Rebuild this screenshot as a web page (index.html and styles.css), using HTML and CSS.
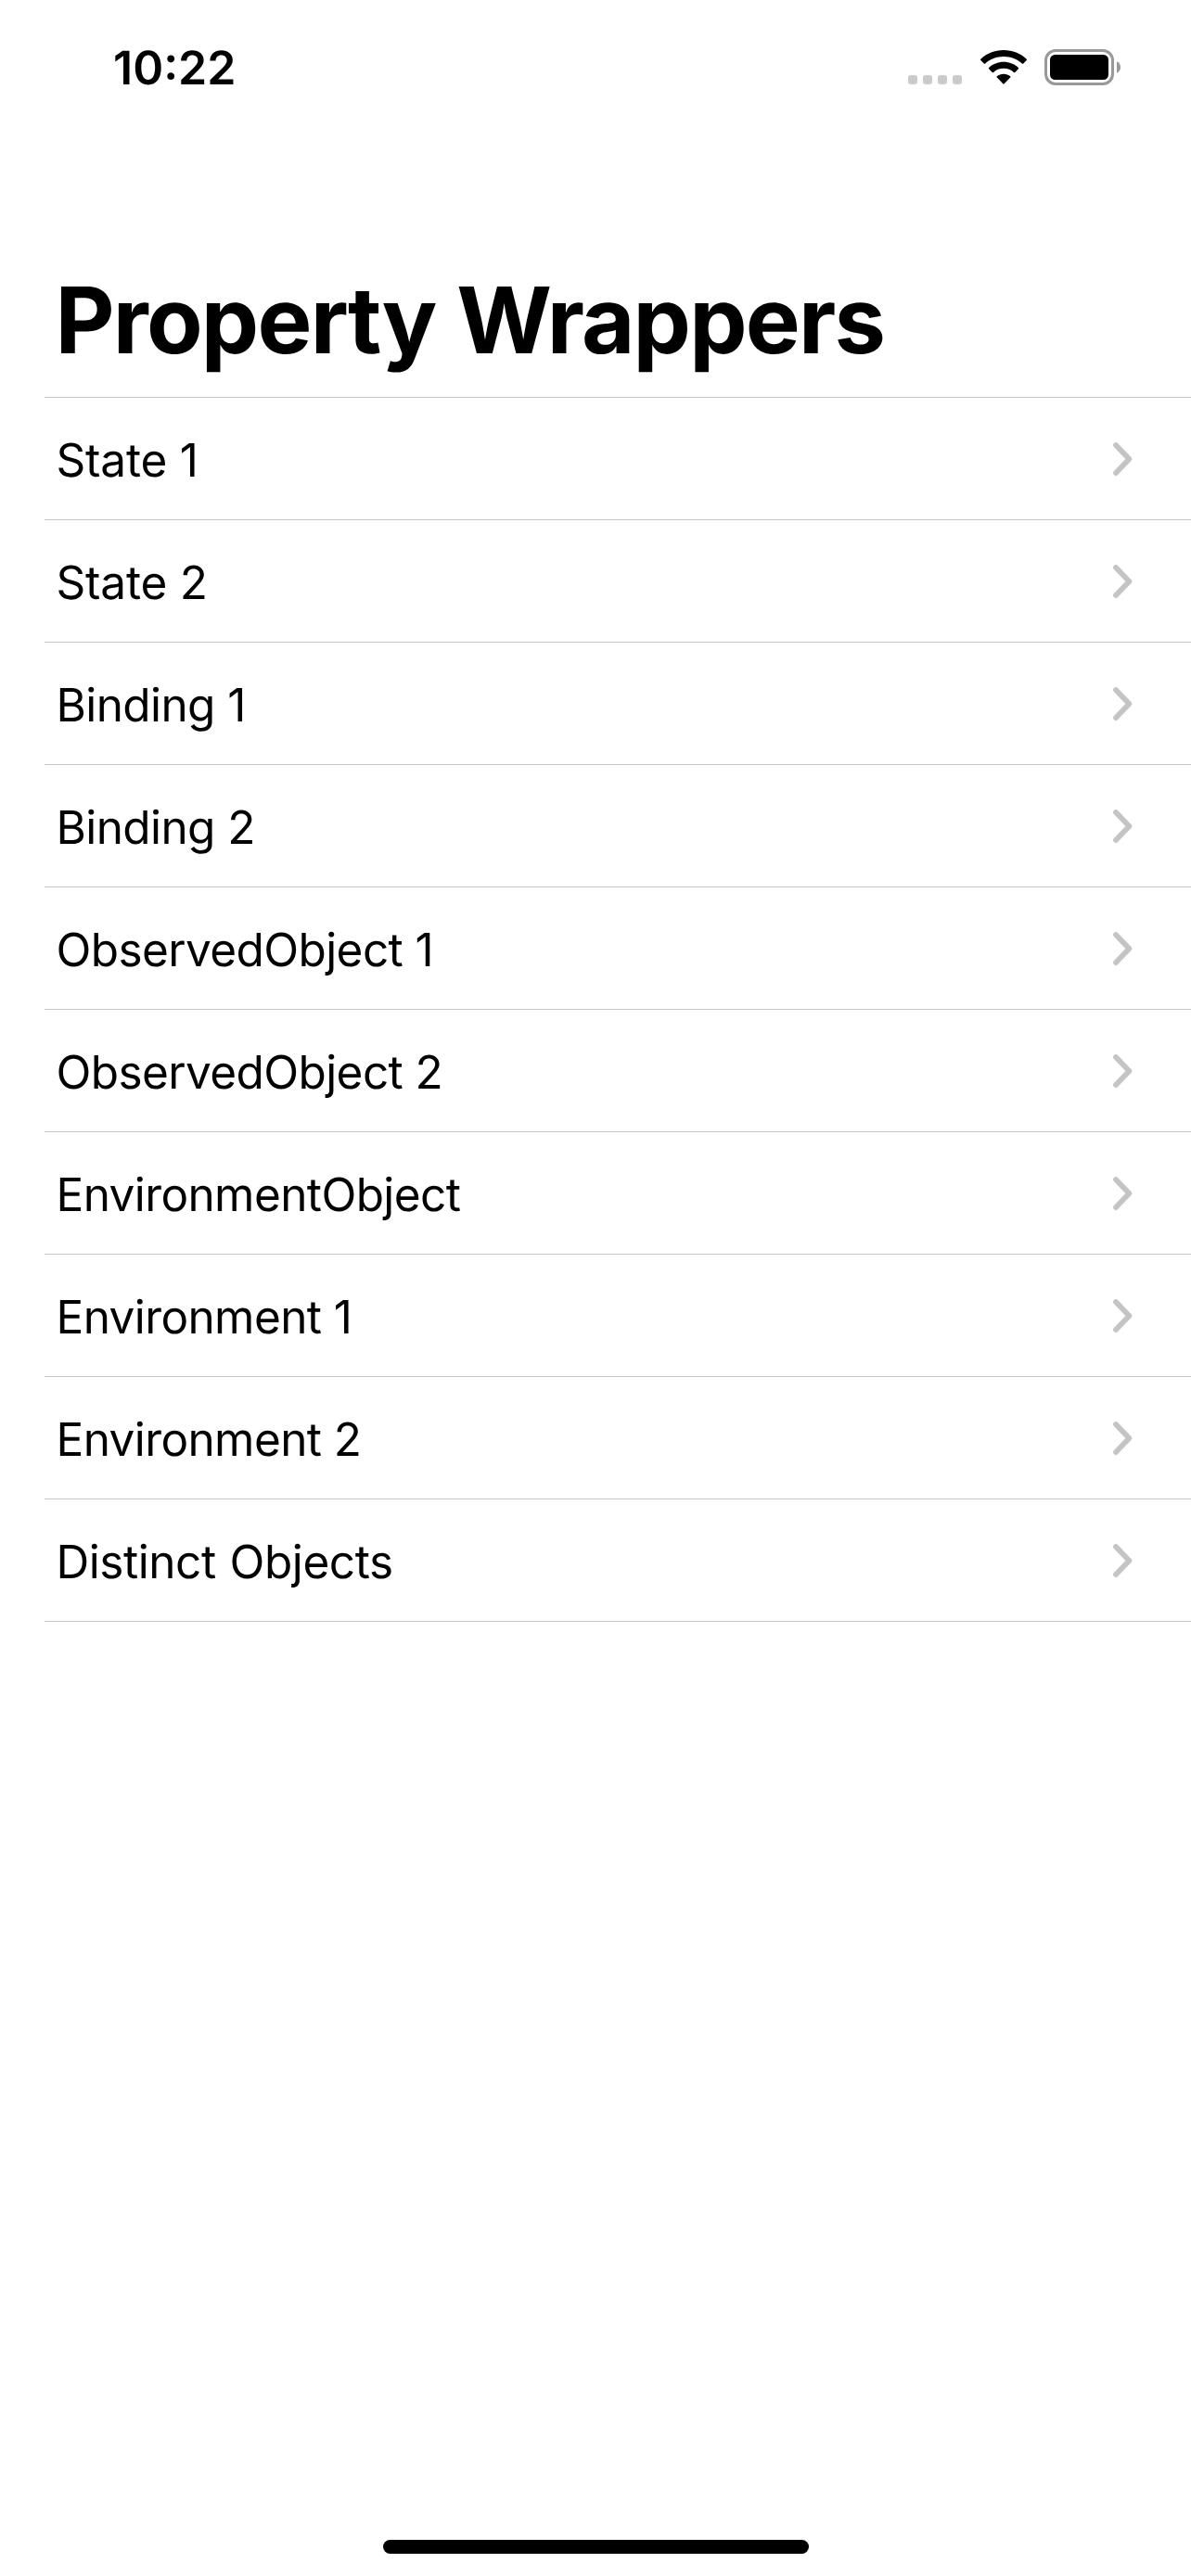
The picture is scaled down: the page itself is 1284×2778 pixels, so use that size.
FILE: index.html
```html
<!DOCTYPE html>
<html lang="en">
<head>
<meta charset="utf-8">
<title>Property Wrappers</title>
<link rel="stylesheet" href="styles.css">
</head>
<body>
<svg class="symbols" aria-hidden="true">
  <symbol id="chevron" viewBox="0 0 21 36"><path d="M3 3 L17.4 18 L3 33" fill="none" stroke="#c4c4c6" stroke-width="5.8" stroke-linecap="round" stroke-linejoin="round"/></symbol>
</svg>
<div class="screen">
  <header class="status-bar">
    <time class="clock">10:22</time>
    <div class="indicators">
      <div class="cellular"><i></i><i></i><i></i><i></i></div>
      <svg class="wifi" viewBox="0 0 50 37" width="50" height="37">
        <path d="M25 0C34.5 0 43.3 3.6 49.7 9.7Q50.3 10.3 49.7 11L46.2 14.6Q45.5 15.2 44.8 14.6C39.6 9.8 32.7 7.1 25 7.1S10.4 9.8 5.2 14.6Q4.5 15.2 3.8 14.6L.3 11Q-.3 10.3.3 9.7C6.7 3.6 15.5 0 25 0Z"/>
        <path d="M25 12.8C31.1 12.8 36.7 15.1 40.9 18.9Q41.6 19.6 40.9 20.3L37.3 23.9Q36.6 24.5 35.9 23.9C33 21.3 29.2 19.8 25 19.8S17 21.3 14.1 23.9Q13.4 24.5 12.7 23.9L9.1 20.3Q8.4 19.6 9.1 18.9C13.3 15.1 18.9 12.8 25 12.8Z"/>
        <path d="M25 25.7C27.7 25.7 30.3 26.6 32.2 28.2Q32.9 28.9 32.2 29.6L25.7 36.3Q25 37 24.3 36.3L17.8 29.6Q17.1 28.9 17.8 28.2C19.7 26.6 22.3 25.7 25 25.7Z"/>
      </svg>
      <svg class="battery" viewBox="0 0 82 39" width="82" height="39">
        <rect x="1.5" y="1.5" width="72" height="36" rx="10.5" fill="none" stroke="#999" stroke-width="3"/>
        <rect x="6" y="6" width="63" height="27" rx="5.5"/>
        <path d="M78 13.3C80.5 14.4 82 16.8 82 19.5S80.5 24.6 78 25.7Z" fill="#999"/>
      </svg>
    </div>
  </header>
  <h1 class="title">Property Wrappers</h1>
  <ul class="list">
    <li class="row"><span class="label wide">State 1</span><svg class="chevron"><use href="#chevron"/></svg></li>
    <li class="row"><span class="label wide">State 2</span><svg class="chevron"><use href="#chevron"/></svg></li>
    <li class="row"><span class="label">Binding 1</span><svg class="chevron"><use href="#chevron"/></svg></li>
    <li class="row"><span class="label">Binding 2</span><svg class="chevron"><use href="#chevron"/></svg></li>
    <li class="row"><span class="label">ObservedObject 1</span><svg class="chevron"><use href="#chevron"/></svg></li>
    <li class="row"><span class="label">ObservedObject 2</span><svg class="chevron"><use href="#chevron"/></svg></li>
    <li class="row"><span class="label">EnvironmentObject</span><svg class="chevron"><use href="#chevron"/></svg></li>
    <li class="row"><span class="label">Environment 1</span><svg class="chevron"><use href="#chevron"/></svg></li>
    <li class="row"><span class="label">Environment 2</span><svg class="chevron"><use href="#chevron"/></svg></li>
    <li class="row"><span class="label phrase">Distinct Objects</span><svg class="chevron"><use href="#chevron"/></svg></li>
  </ul>
  <div class="home-indicator"></div>
</div>
</body>
</html>
```
FILE: styles.css
```css
* { box-sizing: border-box; }

body {
  margin: 0;
  background: #fff;
  color: #000;
  font-family: Inter, "Liberation Sans", sans-serif;
  text-rendering: geometricPrecision;
}

.symbols { position: absolute; width: 0; height: 0; }

.screen {
  display: flex;
  flex-direction: column;
  width: 1284px;
  height: 2778px;
  padding-bottom: 24px;
  overflow: hidden;
}

.status-bar {
  display: flex;
  justify-content: space-between;
  height: 141px;
  padding: 43px 76px 0 122px;
}

.clock {
  padding-top: 1px;
  font-size: 50px;
  font-weight: 600;
  line-height: 60px;
}

.indicators {
  display: flex;
  align-items: flex-start;
  padding-top: 10px;
}

.cellular { display: flex; gap: 6px; margin: 28px 20px 0 0; }
.cellular i { width: 10px; height: 10px; border-radius: 3px; background: #cbcbcb; }
.wifi { margin: 1px 19px 0 0; }

.title {
  height: 287px;
  margin: 0;
  padding: 145px 0 0 59.5px;
  font-size: 99px;
  font-weight: 700;
  line-height: 118px;
  letter-spacing: -1.8px;
  word-spacing: 1px;
  white-space: nowrap;
}

.list {
  margin: 0 0 0 48px;
  padding: 0;
  border-top: 1px solid #c6c6c8;
  list-style: none;
}

.row {
  display: flex;
  align-items: center;
  justify-content: space-between;
  height: 132px;
  padding: 0 63px 0 12.5px;
  border-bottom: 1px solid #c6c6c8;
}

.label {
  padding-top: 3px;
  font-size: 49.5px;
  line-height: 60px;
  letter-spacing: -.6px;
  white-space: nowrap;
}
.label.wide { letter-spacing: -.2px; }
.label.phrase { letter-spacing: -.45px; word-spacing: 1.5px; }

.chevron { width: 21px; height: 36px; }

.home-indicator {
  align-self: center;
  width: 459px;
  height: 15px;
  margin-top: auto;
  border-radius: 8px;
  background: #000;
}
```
